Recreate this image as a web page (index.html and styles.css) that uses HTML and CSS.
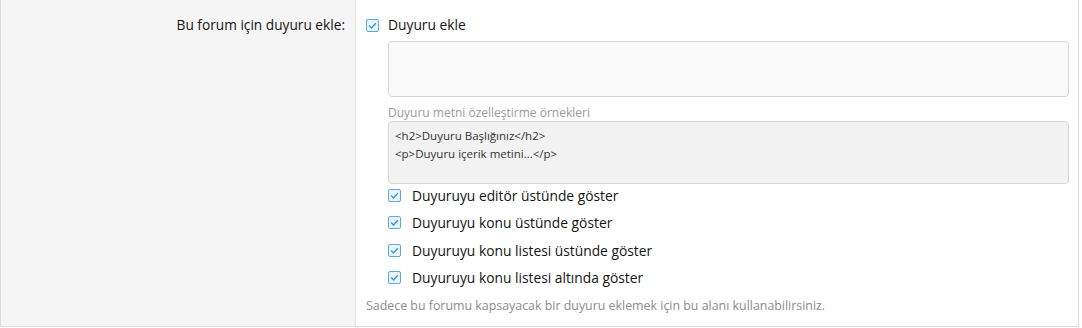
FILE: index.html
```html
<!DOCTYPE html>
<html lang="tr">
<head>
    <meta charset="UTF-8">
    <title>Forum duyurusu</title>
    <link rel="stylesheet" href="styles.css">
</head>
<body>
    <div class="form-row">
        <div class="form-label">Bu forum için duyuru ekle:</div>
        <div class="form-input">
            <label class="check main-check">
                <svg class="box" width="13" height="13" viewBox="0 0 13 13"><rect x="0.5" y="0.5" width="12" height="12" rx="1.5" fill="#e9f4fc" stroke="#5aa9e2"/><path d="M3.2 6.6 L5.5 8.9 L9.8 4.2" fill="none" stroke="#3f95d6" stroke-width="1.4"/></svg>
                <span>Duyuru ekle</span>
            </label>
            <div class="nested">
                <div class="textarea"></div>
                <div class="sub-label">Duyuru metni özelleştirme örnekleri</div>
                <div class="code-box">&lt;h2&gt;Duyuru Başlığınız&lt;/h2&gt;<br>&lt;p&gt;Duyuru içerik metini...&lt;/p&gt;</div>
                <ul class="options">
                    <li class="check">
                        <svg class="box" width="13" height="13" viewBox="0 0 13 13"><rect x="0.5" y="0.5" width="12" height="12" rx="1.5" fill="#e9f4fc" stroke="#5aa9e2"/><path d="M3.2 6.6 L5.5 8.9 L9.8 4.2" fill="none" stroke="#3f95d6" stroke-width="1.4"/></svg>
                        <span>Duyuruyu editör üstünde göster</span>
                    </li>
                    <li class="check">
                        <svg class="box" width="13" height="13" viewBox="0 0 13 13"><rect x="0.5" y="0.5" width="12" height="12" rx="1.5" fill="#e9f4fc" stroke="#5aa9e2"/><path d="M3.2 6.6 L5.5 8.9 L9.8 4.2" fill="none" stroke="#3f95d6" stroke-width="1.4"/></svg>
                        <span>Duyuruyu konu üstünde göster</span>
                    </li>
                    <li class="check">
                        <svg class="box" width="13" height="13" viewBox="0 0 13 13"><rect x="0.5" y="0.5" width="12" height="12" rx="1.5" fill="#e9f4fc" stroke="#5aa9e2"/><path d="M3.2 6.6 L5.5 8.9 L9.8 4.2" fill="none" stroke="#3f95d6" stroke-width="1.4"/></svg>
                        <span>Duyuruyu konu listesi üstünde göster</span>
                    </li>
                    <li class="check">
                        <svg class="box" width="13" height="13" viewBox="0 0 13 13"><rect x="0.5" y="0.5" width="12" height="12" rx="1.5" fill="#e9f4fc" stroke="#5aa9e2"/><path d="M3.2 6.6 L5.5 8.9 L9.8 4.2" fill="none" stroke="#3f95d6" stroke-width="1.4"/></svg>
                        <span>Duyuruyu konu listesi altında göster</span>
                    </li>
                </ul>
            </div>
            <div class="hint">Sadece bu forumu kapsayacak bir duyuru eklemek için bu alanı kullanabilirsiniz.</div>
        </div>
    </div>
</body>
</html>
```

FILE: styles.css
```css
body {
    margin: 0;
    font-family: "Open Sans", "Noto Sans", sans-serif;
    color: #141414;
    background: #fff;
}
.form-row {
    display: flex;
    width: 1079px;
    height: 327px;
    box-sizing: border-box;
    border: 1px solid #dcdcdc;
    border-top: none;
}
.form-label {
    width: 355px;
    box-sizing: border-box;
    background: #f5f5f5;
    border-right: 1px solid #e2e2e2;
    text-align: right;
    padding: 15px 10px 0 0;
    font-size: 13.7px;
    line-height: 20px;
}
.form-input {
    flex: 1;
    padding: 15px 9px 0 10px;
}
.check {
    display: flex;
    align-items: center;
    font-size: 13.8px;
}
.box {
    flex: none;
    margin-right: 9px;
}
.main-check {
    line-height: 20px;
}
.nested {
    margin-left: 22px;
}
.textarea {
    margin-top: 6px;
    height: 54px;
    background: #fafafa;
    border: 1px solid #d8d8d8;
    border-radius: 4px;
}
.sub-label {
    margin-top: 8px;
    font-size: 12px;
    line-height: 16px;
    color: #9a9a9a;
}
.code-box {
    height: 36px;
    padding: 5px 6px 20px;
    background: #f2f2f2;
    border: 1px solid #d8d8d8;
    border-radius: 4px;
    font-size: 11.5px;
    line-height: 18px;
    color: #333;
}
.options {
    list-style: none;
    margin: -2px 0 0;
    padding: 0;
}
.options .check {
    height: 27.3px;
}
.options .box {
    margin-right: 11px;
}
.hint {
    margin-top: 5px;
    font-size: 12.4px;
    line-height: 20px;
    color: #8c8c8c;
}
```
